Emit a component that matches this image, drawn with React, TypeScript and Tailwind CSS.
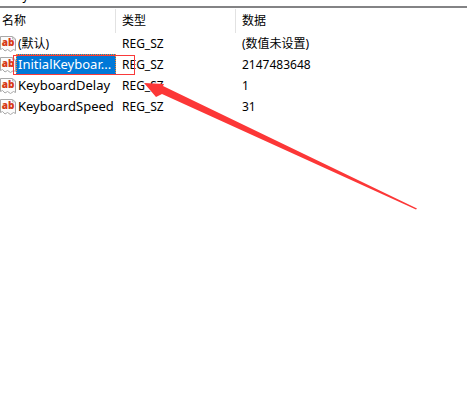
import React from "react";

interface RegistryValue {
  name: string;
  type: string;
  data: string;
  unset?: boolean;
  selected?: boolean;
}

const VALUES: RegistryValue[] = [
  { name: "(默认)", type: "REG_SZ", data: "(数值未设置)", unset: true },
  { name: "InitialKeyboar...", type: "REG_SZ", data: "2147483648", selected: true },
  { name: "KeyboardDelay", type: "REG_SZ", data: "1" },
  { name: "KeyboardSpeed", type: "REG_SZ", data: "31" },
];

// "ab" string value icon, a torn sheet with red letters
function StringIcon() {
  return (
    <span className="relative block h-4 w-4 shrink-0">
      <svg viewBox="0 0 16 16" className="absolute inset-0 h-4 w-4" aria-hidden="true">
        <path
          d="M0.5 0.5H12.5L15.5 3V14.5L13.5 13.5L10.5 15.5L7.5 13.5L5 15L2.5 12.5L0.5 13.5Z"
          fill="#fbfbfb"
          stroke="#a8a8a8"
        />
        <path d="M12.5 0.5V3H15.5" fill="none" stroke="#bdbdbd" />
      </svg>
      <span className="absolute inset-x-0 top-0 text-center font-['Open_Sans',sans-serif] text-[10px] leading-[13px] font-extrabold text-[#d63a15]">
        ab
      </span>
    </span>
  );
}

export default function App() {
  return (
    <div className="relative min-h-screen overflow-hidden bg-white font-['Noto_Sans','Noto_Sans_CJK_SC',sans-serif] text-[12px] text-black">
      {/* Bottom edge of the address bar */}
      <div className="flex h-2 items-end overflow-hidden border-b-2 border-[#838385] pl-1">
        <span className="leading-5">\Key</span>
      </div>

      <table className="mt-px w-full table-fixed border-separate border-spacing-0 text-left">
        <colgroup>
          <col className="w-[116px]" />
          <col className="w-[120px]" />
          <col />
        </colgroup>
        <thead>
          <tr className="h-6 leading-6">
            <th className="border-r border-[#e2e2e2] p-0 pl-[2px] font-normal">名称</th>
            <th className="border-r border-[#e2e2e2] p-0 pl-[6px] font-normal">类型</th>
            <th className="p-0 pl-[6px] font-normal">数据</th>
          </tr>
        </thead>
        <tbody>
          {VALUES.map((value) => (
            <tr key={value.name} className="h-[21px] leading-[21px] whitespace-nowrap">
              <td className="relative p-0">
                <div className="flex items-center">
                  <StringIcon />
                  <span
                    className={`flex-1 pl-[2px] ${value.unset ? "text-[12px]" : "text-[13px]"} ${
                      value.selected
                        ? "bg-[#0078d7] text-white outline-1 -outline-offset-1 outline-dotted outline-[#ff8728]"
                        : ""
                    }`}
                  >
                    {value.name}
                  </span>
                </div>
                {/* Red frame around the selected value */}
                {value.selected && (
                  <div className="absolute top-px left-[13px] h-5 w-[122px] border border-[#f93a3a]" />
                )}
              </td>
              <td className="p-0 pl-[6px]">{value.type}</td>
              <td className="p-0 pl-[6px]">{value.data}</td>
            </tr>
          ))}
        </tbody>
      </table>

      {/* Arrow pointing at the selected value */}
      <svg
        viewBox="0 0 273 128"
        className="pointer-events-none absolute top-[82px] left-[144px] h-[128px] w-[273px]"
        aria-hidden="true"
      >
        <path d="M0 1L20 2L19 4L273 126.5L272 127.5L18 12L12 15Z" fill="#fc3737" />
      </svg>
    </div>
  );
}
